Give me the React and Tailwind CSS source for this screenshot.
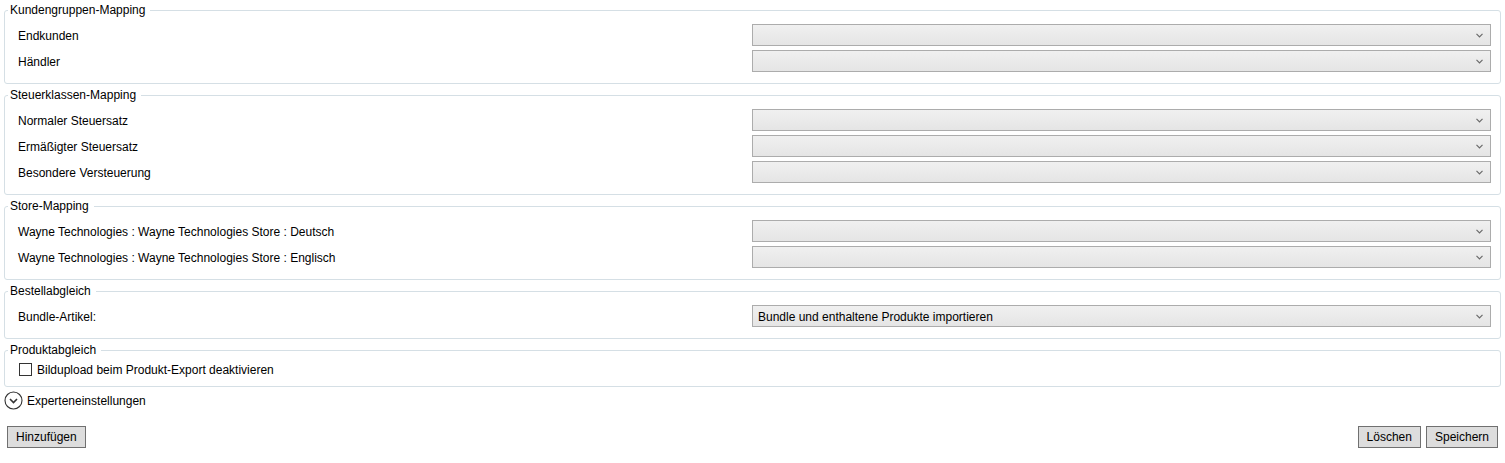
import React from 'react';

const groups = [
  { title: 'Kundengruppen-Mapping', rows: ['Endkunden', 'Händler'] },
  { title: 'Steuerklassen-Mapping', rows: ['Normaler Steuersatz', 'Ermäßigter Steuersatz', 'Besondere Versteuerung'] },
  {
    title: 'Store-Mapping',
    rows: [
      'Wayne Technologies : Wayne Technologies Store : Deutsch',
      'Wayne Technologies : Wayne Technologies Store : Englisch',
    ],
  },
];

const Chevron = () => (
  <svg width="7" height="5" viewBox="0 0 7 5" className="shrink-0">
    <path d="M0.5 0.8 L3.5 3.8 L6.5 0.8" fill="none" stroke="#6a6a6a" strokeWidth="1.2" />
  </svg>
);

const Select = ({ value }) => (
  <div className="w-[739px] h-[22px] shrink-0 flex items-center justify-between pl-[5px] pr-[7px] border border-[#acacac] bg-gradient-to-b from-[#f0f0f0] to-[#e5e5e5]">
    <span className="truncate pt-[1px]">{value}</span>
    <Chevron />
  </div>
);

const Group = ({ title, children }) => (
  <fieldset className="mx-[4px] border border-[#d5dfe5] rounded-[3px]">
    <legend className="ml-[3px] pl-[2px] pr-[5px] leading-[16px]">{title}</legend>
    {children}
  </fieldset>
);

const Row = ({ label, value }) => (
  <div className="flex items-center justify-between h-[22px] pl-[13px] pr-[9px]">
    <span className="pt-[2px]">{label}</span>
    <Select value={value} />
  </div>
);

const Button = ({ children }) => (
  <button className="h-[22px] px-[8px] border border-[#707070] bg-[#dddddd] leading-[20px]">
    {children}
  </button>
);

export default function App() {
  return (
    <div className="w-[1505px] h-[463px] bg-white text-black text-[12px] leading-[16px] font-['Liberation_Sans',sans-serif] overflow-hidden">
      <div className="pt-[2px] flex flex-col gap-[3px]">
        {groups.map((g) => (
          <Group key={g.title} title={g.title}>
            <div className="flex flex-col gap-[4px] pt-[6px] pb-[11px]">
              {g.rows.map((r) => (
                <Row key={r} label={r} />
              ))}
            </div>
          </Group>
        ))}

        <Group title="Bestellabgleich">
          <div className="pt-[6px] pb-[11px]">
            <Row label="Bundle-Artikel:" value="Bundle und enthaltene Produkte importieren" />
          </div>
        </Group>

        <Group title="Produktabgleich">
          <div className="flex items-center gap-[5px] pt-[5px] pb-[10px] pl-[14px] h-[28px]">
            <span className="w-[13px] h-[13px] border border-[#333333] bg-white shrink-0" />
            <span className="leading-[13px] pt-[1px]">Bildupload beim Produkt-Export deaktivieren</span>
          </div>
        </Group>
      </div>

      <div className="mx-[4px] mt-[2px] h-[22px] flex items-center gap-[4px]">
        <svg width="19" height="19" viewBox="0 0 19 19" className="shrink-0">
          <circle cx="9.5" cy="9.5" r="8.5" fill="none" stroke="#333333" strokeWidth="1.1" />
          <path d="M6 8 L9.5 11.5 L13 8" fill="none" stroke="#333333" strokeWidth="1.6" />
        </svg>
        <span className="pt-[1px]">Experteneinstellungen</span>
      </div>

      <div className="mt-[15px] px-[7px] flex items-center justify-between">
        <Button>Hinzufügen</Button>
        <div className="flex gap-[5px]">
          <Button>Löschen</Button>
          <Button>Speichern</Button>
        </div>
      </div>
    </div>
  );
}
